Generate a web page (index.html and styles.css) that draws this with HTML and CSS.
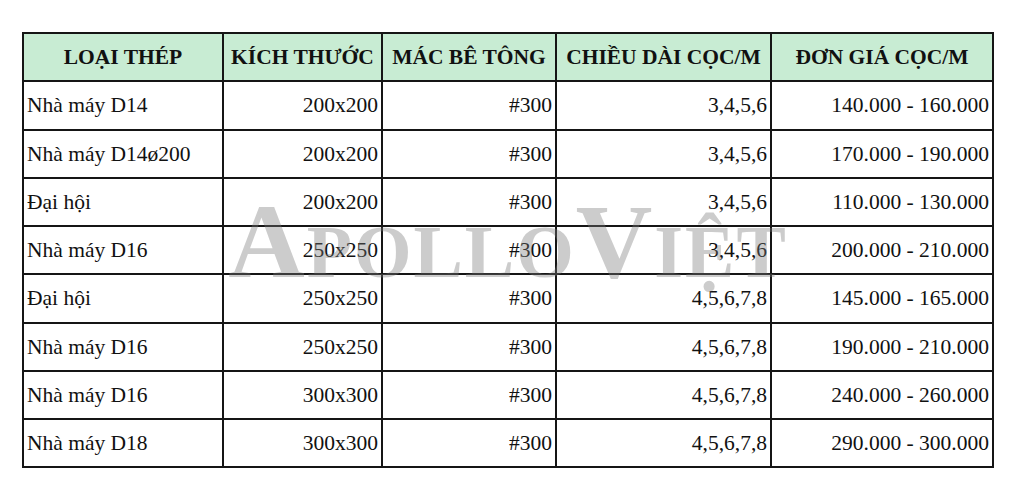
FILE: index.html
```html
<!DOCTYPE html>
<html lang="vi">
<head>
<meta charset="utf-8">
<title>Bảng giá cọc</title>
<link rel="stylesheet" href="styles.css">
</head>
<body>
<div class="wrap">
  <table class="price">
    <colgroup>
      <col class="c1"><col class="c2"><col class="c3"><col class="c4"><col class="c5">
    </colgroup>
    <thead>
      <tr>
        <th>LOẠI THÉP</th>
        <th>KÍCH THƯỚC</th>
        <th>MÁC BÊ TÔNG</th>
        <th>CHIỀU DÀI CỌC/M</th>
        <th>ĐƠN GIÁ CỌC/M</th>
      </tr>
    </thead>
    <tbody>
      <tr><td class="l">Nhà máy D14</td><td>200x200</td><td>#300</td><td>3,4,5,6</td><td>140.000 - 160.000</td></tr>
      <tr><td class="l">Nhà máy D14ø200</td><td>200x200</td><td>#300</td><td>3,4,5,6</td><td>170.000 - 190.000</td></tr>
      <tr><td class="l">Đại hội</td><td>200x200</td><td>#300</td><td>3,4,5,6</td><td>110.000 - 130.000</td></tr>
      <tr><td class="l">Nhà máy D16</td><td>250x250</td><td>#300</td><td>3,4,5,6</td><td>200.000 - 210.000</td></tr>
      <tr><td class="l">Đại hội</td><td>250x250</td><td>#300</td><td>4,5,6,7,8</td><td>145.000 - 165.000</td></tr>
      <tr><td class="l">Nhà máy D16</td><td>250x250</td><td>#300</td><td>4,5,6,7,8</td><td>190.000 - 210.000</td></tr>
      <tr><td class="l">Nhà máy D16</td><td>300x300</td><td>#300</td><td>4,5,6,7,8</td><td>240.000 - 260.000</td></tr>
      <tr><td class="l">Nhà máy D18</td><td>300x300</td><td>#300</td><td>4,5,6,7,8</td><td>290.000 - 300.000</td></tr>
    </tbody>
  </table>
  <div class="watermark" aria-hidden="true">ApolloViệt</div>
</div>
</body>
</html>
```
FILE: styles.css
```css
html, body {
  margin: 0;
  padding: 0;
  background: #ffffff;
}
body {
  font-family: "Liberation Serif", "Times New Roman", serif;
  color: #111;
}
.wrap {
  position: relative;
  width: 972px;
  margin: 32px 0 0 22px;
}
.price {
  border-collapse: collapse;
  table-layout: fixed;
  width: 972px;
  font-size: 21.5px;
}
.c1 { width: 200px; }
.c2 { width: 159px; }
.c3 { width: 174px; }
.c4 { width: 215px; }
.c5 { width: 222px; }
.price th, .price td {
  border: 2px solid #151515;
  height: 45.25px;
  padding: 1px 3px 0 3px;
  white-space: nowrap;
  overflow: hidden;
}
.price th {
  background: #c8ecd3;
  font-weight: bold;
  text-align: center;
}
.price td {
  text-align: right;
}
.price td.l {
  text-align: left;
}
.watermark {
  position: absolute;
  left: 0;
  right: 0;
  top: 157px;
  text-align: center;
  font-family: "Liberation Serif", "Times New Roman", serif;
  font-weight: bold;
  font-size: 106px;
  font-variant: small-caps;
  letter-spacing: 2px;
  line-height: 1;
  color: rgba(120, 120, 120, 0.38);
  pointer-events: none;
}
```
